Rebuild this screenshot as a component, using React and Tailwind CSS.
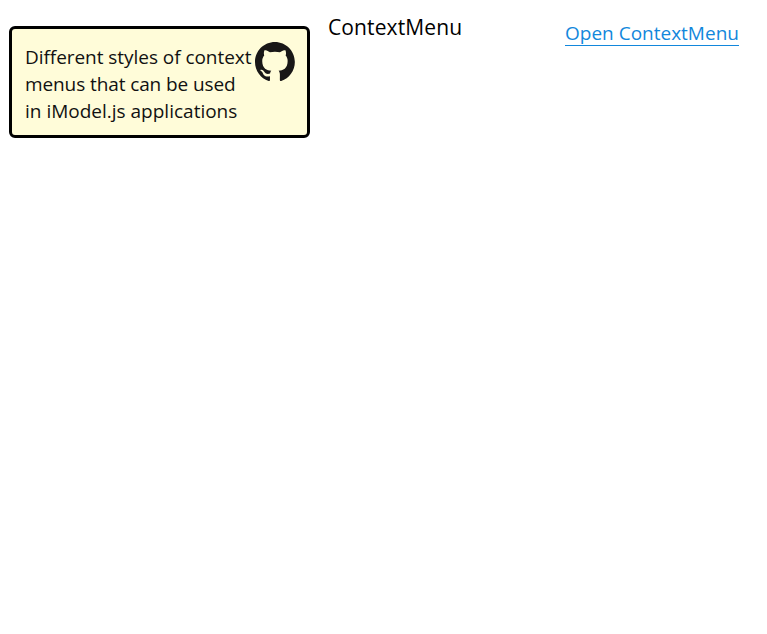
function GitHubMark() {
  return (
    <svg viewBox="0 0 98 96" preserveAspectRatio="none" className="h-[39px] w-[40px] shrink-0 fill-[#191717]" aria-hidden="true">
      <path fillRule="evenodd" clipRule="evenodd" d="M48.854 0C21.839 0 0 22 0 49.217c0 21.756 13.993 40.172 33.405 46.69 2.427.49 3.316-1.059 3.316-2.362 0-1.141-.08-5.052-.08-9.127-13.59 2.934-16.42-5.867-16.42-5.867-2.184-5.704-5.42-7.17-5.42-7.17-4.448-3.015.324-3.015.324-3.015 4.934.326 7.523 5.052 7.523 5.052 4.367 7.496 11.404 5.378 14.235 4.074.404-3.178 1.699-5.378 3.074-6.6-10.839-1.141-22.243-5.378-22.243-24.283 0-5.378 1.94-9.778 5.014-13.2-.485-1.222-2.184-6.275.486-13.038 0 0 4.125-1.304 13.426 5.052a46.97 46.97 0 0 1 12.214-1.63c4.125 0 8.33.571 12.213 1.63 9.302-6.356 13.427-5.052 13.427-5.052 2.67 6.763.97 11.816.485 13.038 3.155 3.422 5.015 7.822 5.015 13.2 0 18.905-11.404 23.06-22.324 24.283 1.78 1.548 3.316 4.481 3.316 9.126 0 6.6-.08 11.897-.08 13.526 0 1.304.89 2.853 3.316 2.364 19.412-6.52 33.405-24.935 33.405-46.691C97.707 22 75.788 0 48.854 0z" />
    </svg>
  );
}

export default function App() {
  return (
    <main className="flex h-[634px] w-[767px] items-start overflow-hidden bg-white font-['Open_Sans','Noto_Sans',sans-serif]">
      <section className="mt-[26px] ml-[9px] flex h-[112px] w-[301px] shrink-0 items-start rounded-[6px] border-[3px] border-black bg-[#fffcd9] pt-[13px] pl-[13px] text-[19px] leading-[27px] whitespace-nowrap text-[#111]">
        <p className="mt-[2px] w-[230px] shrink-0">
          <span className="block tracking-[-0.05px]">Different styles of context</span>
          <span className="block tracking-[-0.1px]">menus that can be used</span>
          <span className="block tracking-[0px]">in iModel.js applications</span>
        </p>
        <GitHubMark />
      </section>
      <h1 className="mt-[12px] ml-[18px] w-[237px] shrink-0 text-[21px] leading-[30px] tracking-[0.12px] text-black">ContextMenu</h1>
      <a className="mt-[20px] h-[26px] w-[174px] shrink-0 border-b border-[#1287dc] text-[19px] leading-[26px] whitespace-nowrap text-[#1287dc]">
        Open ContextMenu
      </a>
    </main>
  );
}
